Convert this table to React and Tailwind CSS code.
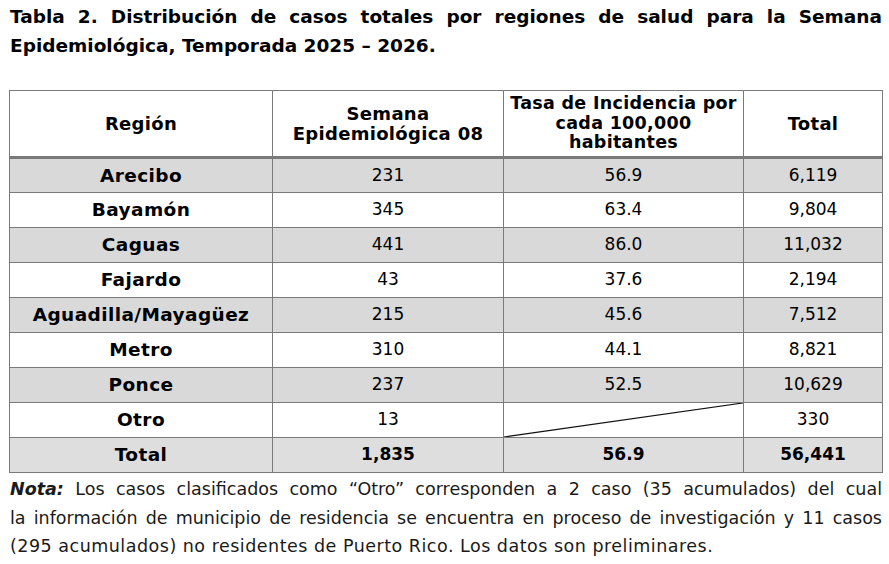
import React from "react";

const filas = [
  { region: "Arecibo", semana: "231", tasa: "56.9", total: "6,119" },
  { region: "Bayamón", semana: "345", tasa: "63.4", total: "9,804" },
  { region: "Caguas", semana: "441", tasa: "86.0", total: "11,032" },
  { region: "Fajardo", semana: "43", tasa: "37.6", total: "2,194" },
  { region: "Aguadilla/Mayagüez", semana: "215", tasa: "45.6", total: "7,512" },
  { region: "Metro", semana: "310", tasa: "44.1", total: "8,821" },
  { region: "Ponce", semana: "237", tasa: "52.5", total: "10,629" },
  { region: "Otro", semana: "13", tasa: null, total: "330" },
];

const celda = "border border-[#7a7a7a] text-center p-0";

const App = () => {
  return (
    <div className="w-[889px] h-[564px] bg-white text-black overflow-hidden font-['DejaVu_Sans',sans-serif]">
      <div className="pl-[10px] pr-[7px] pt-[2px]">
        {/* Titulo */}
        <p className="text-[18.5px] font-bold leading-[29px] text-justify">
          Tabla 2. Distribución de casos totales por regiones de salud para la Semana Epidemiológica, Temporada 2025 – 2026.
        </p>
      </div>

      {/* Tabla */}
      <div className="pl-[9px] pr-[7px] mt-[30px]">
        <table className="w-[873px] table-fixed border-collapse text-[17px]">
          <colgroup>
            <col className="w-[263px]" />
            <col className="w-[231px]" />
            <col className="w-[240px]" />
            <col className="w-[139px]" />
          </colgroup>
          <thead className="text-[18px] tracking-[0.3px]">
            <tr className="h-[67px]">
              <th className={`${celda} border-b-[3px] font-bold leading-[20px]`}>Región</th>
              <th className={`${celda} border-b-[3px] font-bold leading-[20px] whitespace-nowrap`}>
                Semana<br />Epidemiológica 08
              </th>
              <th className={`${celda} border-b-[3px] font-bold text-[17.5px] leading-[19.5px] whitespace-nowrap`}>
                Tasa de Incidencia por<br />cada 100,000<br />habitantes
              </th>
              <th className={`${celda} border-b-[3px] font-bold leading-[20px]`}>Total</th>
            </tr>
          </thead>
          <tbody>
            {filas.map((f, idx) => (
              <tr key={idx} className={`h-[35px] ${idx % 2 === 0 ? "bg-[#d9d9d9]" : "bg-white"}`}>
                <td className={`${celda} font-bold text-[18.5px] tracking-[0.4px]`}>{f.region}</td>
                <td className={celda}>{f.semana}</td>
                {f.tasa ? (
                  <td className={celda}>{f.tasa}</td>
                ) : (
                  <td className={`${celda} relative`}>
                    <svg className="absolute inset-0 w-full h-full" viewBox="0 0 100 100" preserveAspectRatio="none">
                      <line x1="0" y1="100" x2="100" y2="0" stroke="#111" strokeWidth="1.2" vectorEffect="non-scaling-stroke" />
                    </svg>
                  </td>
                )}
                <td className={celda}>{f.total}</td>
              </tr>
            ))}
            <tr className="h-[35px] bg-[#dedede] font-bold">
              <td className={`${celda} text-[18.5px] tracking-[0.4px]`}>Total</td>
              <td className={celda}>1,835</td>
              <td className={celda}>56.9</td>
              <td className={celda}>56,441</td>
            </tr>
          </tbody>
        </table>
      </div>

      {/* Nota */}
      <div className="pl-[10px] pr-[7px] mt-[2px] text-[17.5px] leading-[28.5px] text-[#1a1a1a]">
        <p className="text-justify [text-align-last:justify]">
          <span className="font-bold italic">Nota:</span> Los casos clasificados como “Otro” corresponden a 2 caso (35 acumulados) del cual
        </p>
        <p className="text-justify [text-align-last:justify]">
          la información de municipio de residencia se encuentra en proceso de investigación y 11 casos
        </p>
        <p className="tracking-[0.5px]">(295 acumulados) no residentes de Puerto Rico. Los datos son preliminares.</p>
      </div>
    </div>
  );
};

export default App;
